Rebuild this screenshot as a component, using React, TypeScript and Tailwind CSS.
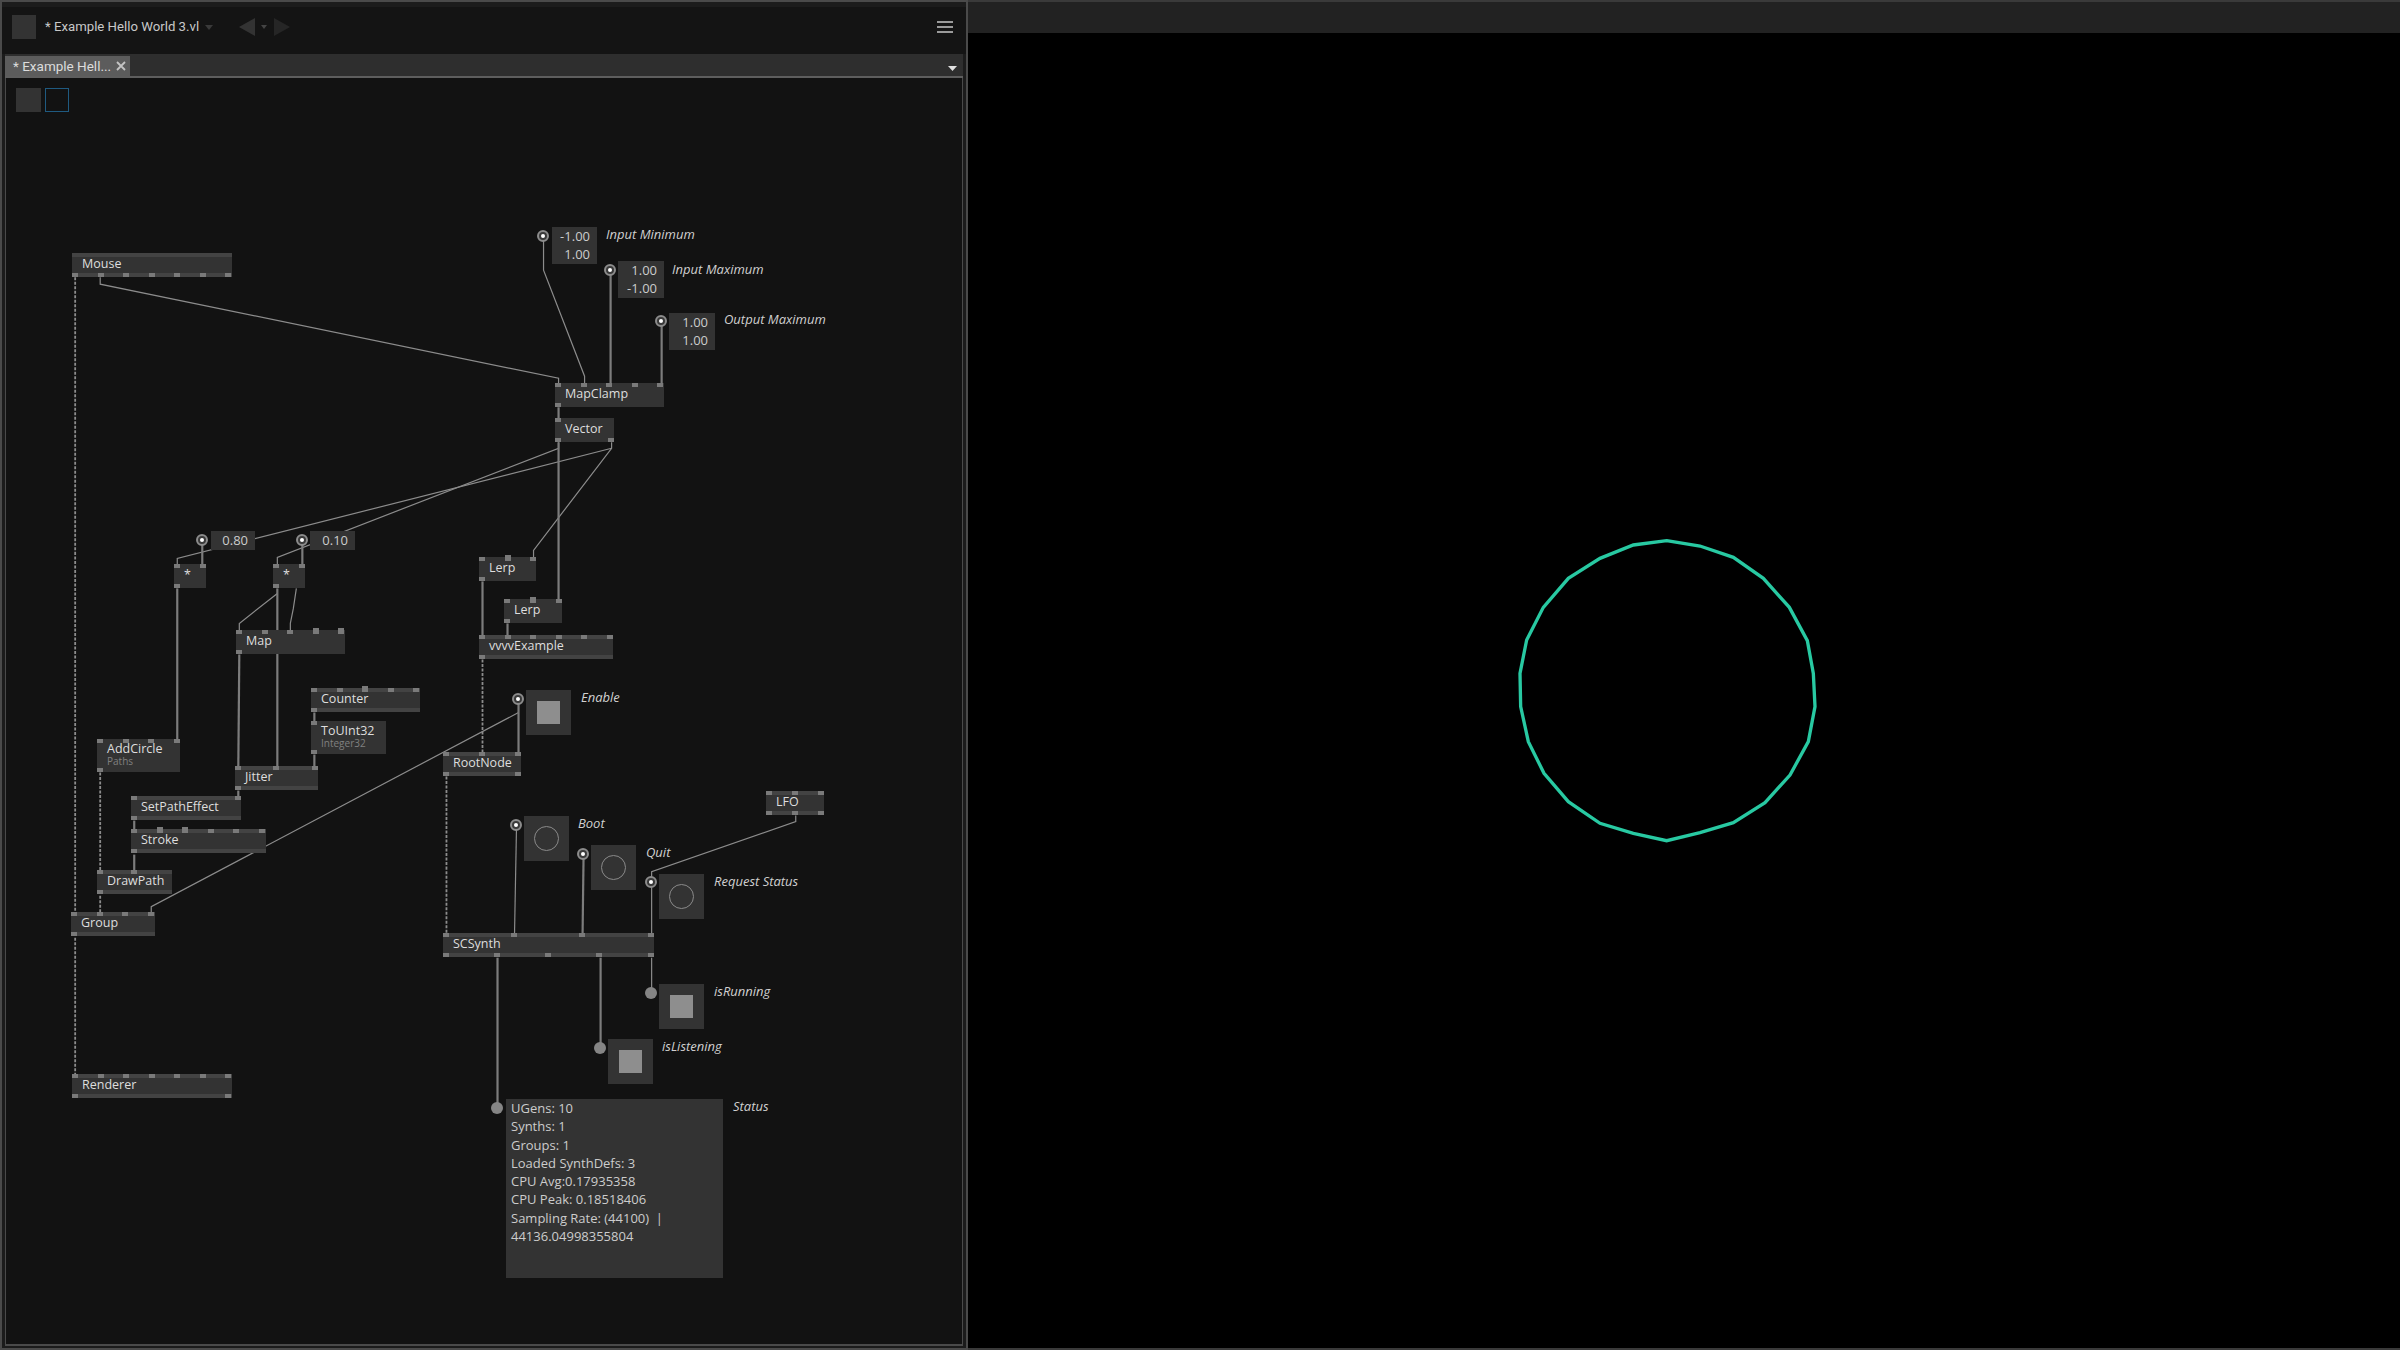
import React from 'react';

const OX = 6;
const OY = 78;

type NodeDef = {
    name: string;
    sub?: string;
    x: number;
    y: number;
    w: number;
    h?: number;
    bars?: boolean;
    top?: number[];
    big?: number[];
    bottom?: number[];
};

const row = [3, 28.5, 54, 79.5, 105, 130.5, 156];

const nodes: NodeDef[] = [
    { name: 'Mouse', x: 72, y: 253, w: 160, bars: true, bottom: row },
    { name: 'MapClamp', x: 555, y: 383, w: 109, top: row.slice(0, 5), bottom: [3] },
    { name: 'Vector', x: 555, y: 418, w: 59, top: [3], bottom: [3, 55.5] },
    { name: '*', x: 174, y: 564, w: 32, top: [3, 28.5], bottom: [3] },
    { name: '*', x: 273, y: 564, w: 32, top: [3, 28.5], bottom: [3] },
    { name: 'Lerp', x: 479, y: 557, w: 57, top: [3, 54], big: [28.5], bottom: [3] },
    { name: 'Lerp', x: 504, y: 599, w: 58, top: [3, 54.5], big: [29], bottom: [3] },
    { name: 'vvvvExample', x: 479, y: 635, w: 134, bars: true, top: row.slice(0, 6), bottom: [3] },
    { name: 'Map', x: 236, y: 630, w: 109, top: [3, 28.5, 54], big: [79.5, 105], bottom: [3] },
    { name: 'Counter', x: 311, y: 688, w: 109, bars: true, top: [3, 28.5, 79.5, 105], big: [54], bottom: [3] },
    { name: 'ToUInt32', sub: 'Integer32', x: 311, y: 721, w: 75, h: 33, top: [3], bottom: [3] },
    { name: 'AddCircle', sub: 'Paths', x: 97, y: 739, w: 83, h: 33, top: [3, 28.5, 54, 79.5], bottom: [3] },
    { name: 'RootNode', x: 443, y: 752, w: 78, bars: true, top: [3, 39, 75], bottom: [3, 75] },
    { name: 'Jitter', x: 235, y: 766, w: 83, bars: true, top: [3, 41, 79.5], bottom: [3] },
    { name: 'LFO', x: 766, y: 791, w: 58, bars: true, top: [3, 29, 55], bottom: [3, 29, 55] },
    { name: 'SetPathEffect', x: 131, y: 796, w: 110, bars: true, top: [3, 107], bottom: [3] },
    { name: 'Stroke', x: 131, y: 829, w: 135, bars: true, top: [3, 79.5, 105, 130.5], big: [28.5, 54], bottom: [3] },
    { name: 'DrawPath', x: 97, y: 870, w: 75, bars: true, top: [3, 37], bottom: [3] },
    { name: 'Group', x: 71, y: 912, w: 84, bars: true, top: row.slice(0, 4), bottom: [3] },
    { name: 'SCSynth', x: 443, y: 933, w: 211, bars: true, top: [3, 71, 139, 207.5], bottom: [3, 54, 105, 156, 207.5] },
    { name: 'Renderer', x: 72, y: 1074, w: 160, bars: true, top: row, bottom: [3, 156] },
];

const values = [
    { x: 211, y: 531, w: 44, h: 19, lines: ['0.80'] },
    { x: 310, y: 531, w: 45, h: 19, lines: ['0.10'] },
    { x: 552, y: 227, w: 45, h: 37, lines: ['-1.00', '1.00'] },
    { x: 618, y: 261, w: 46, h: 37, lines: ['1.00', '-1.00'] },
    { x: 669, y: 313, w: 46, h: 37, lines: ['1.00', '1.00'] },
];

const toggles = [
    { x: 526, y: 690, on: true },
    { x: 524, y: 816, on: false },
    { x: 591, y: 845, on: false },
    { x: 659, y: 874, on: false },
    { x: 659, y: 984, on: true },
    { x: 608, y: 1039, on: true },
];

const labels = [
    { x: 606, y: 235, text: 'Input Minimum' },
    { x: 672, y: 270, text: 'Input Maximum' },
    { x: 724, y: 320, text: 'Output Maximum' },
    { x: 581, y: 698, text: 'Enable' },
    { x: 578, y: 824, text: 'Boot' },
    { x: 646, y: 853, text: 'Quit' },
    { x: 714, y: 882, text: 'Request Status' },
    { x: 714, y: 992, text: 'isRunning' },
    { x: 662, y: 1047, text: 'isListening' },
    { x: 733, y: 1107, text: 'Status' },
];

const inPins = [
    [202, 540],
    [302, 540],
    [543, 236],
    [610, 270],
    [661, 321],
    [518, 699],
    [516, 825],
    [583, 854],
    [651, 882],
];

const outPins = [
    [651, 993],
    [600, 1048],
    [497, 1108],
];

// value links
const thin = [
    '100,277 100,284 558,378 558,383',
    '543,236 543,270 584,376 584,383',
    '611,442 611,448 533,550 533,557',
    '558,442 558,448 277,557 277,564',
    '611,448 177,558 177,564',
    '277,593 239,623 239,630',
    '296,588 293,608 290,623 290,630',
    '151,912 151,906 518,712',
    '795,815 795,821 651,871 651,882',
    '516,825 514,933',
    '651,882 651,933',
    '651,957 651,993',
];

const thick = [
    '610,270 610,383',
    '661,321 661,383',
    '558,407 558,418',
    '558,442 558,599',
    '202,540 202,564',
    '302,540 302,564',
    '177,588 177,739',
    '277,588 277,766',
    '239,654 238,766',
    '314,712 314,721',
    '314,754 314,766',
    '238,790 238,796',
    '134,820 134,829',
    '134,854 134,870',
    '518,699 518,752',
    '482,581 482,635',
    '507,623 507,635',
    '583,854 582,933',
    '497,957 497,1108',
    '600,957 600,1048',
];

// spread links
const dashed = [
    '75,277 75,912',
    '75,937 75,1074',
    '100,772 100,870',
    '100,895 100,912',
    '482,659 482,752',
    '446,776 446,933',
];

const statusLines = [
    'UGens: 10',
    'Synths: 1',
    'Groups: 1',
    'Loaded SynthDefs: 3',
    'CPU Avg:0.17935358',
    'CPU Peak: 0.18518406',
    'Sampling Rate: (44100)  |',
    '44136.04998355804',
];

const circlePoints =
    '500,62 600,78 700,112 790,175 868,262 922,362 940,460 945,560 925,665 870,765 795,848 700,908 600,938 500,962 400,940 300,910 205,845 132,760 85,665 62,560 60,460 80,360 130,262 205,175 300,115 400,75';

const Pin: React.FC<{ at: number; big?: boolean; side: 'top' | 'bottom' }> = ({ at, big, side }) => (
    <div
        className={`absolute bg-[#7a7a7a] ${big ? 'w-[6px] h-[6px]' : 'w-[6px] h-[4px]'} ${
            side === 'top' ? (big ? '-top-[2px]' : 'top-0') : 'bottom-0'
        }`}
        style={{ left: at - 3 }}
    />
);

const PatchNode: React.FC<{ node: NodeDef }> = ({ node }) => (
    <div
        className={`absolute flex flex-col justify-center pl-[10px] pb-[2px] bg-[#333333] text-[#dedede] ${
            node.bars ? 'border-y-4 border-[#434343]' : ''
        }`}
        style={{ left: node.x - OX, top: node.y - OY, width: node.w, height: node.h ?? 24 }}
    >
        <span className="text-[12.500px] leading-[14px] whitespace-nowrap">{node.name}</span>
        {node.sub && <span className="text-[10px] leading-[11px] text-[#808080]">{node.sub}</span>}
        <div className={`absolute inset-x-0 ${node.bars ? '-top-[4px] -bottom-[4px]' : 'inset-y-0'}`}>
            {node.top?.map((at) => <Pin key={at} at={at} side="top" />)}
            {node.big?.map((at) => <Pin key={at} at={at} big side="top" />)}
            {node.bottom?.map((at) => <Pin key={at} at={at} side="bottom" />)}
        </div>
    </div>
);

const Wires: React.FC = () => (
    <svg className="absolute inset-0 w-full h-full" viewBox={`${OX} ${OY} 955 1265`} fill="none">
        {thin.map((p) => (
            <polyline key={p} points={p} stroke="#8c8c8c" strokeWidth={1.2} />
        ))}
        {thick.map((p) => (
            <polyline key={p} points={p} stroke="#7c7c7c" strokeWidth={2.2} />
        ))}
        {dashed.map((p) => (
            <polyline key={p} points={p} stroke="#8c8c8c" strokeWidth={1.8} strokeDasharray="3 1.5" />
        ))}
    </svg>
);

const App: React.FC = () => {
    return (
        <div className="flex w-[2400px] h-[1350px] overflow-hidden bg-black font-['Open_Sans','Noto_Sans',sans-serif]">
            {/* Patch editor */}
            <div className="flex flex-col w-[968px] h-full bg-[#1b1b1b] border-2 border-[#4a4a4a]">
                {/* Title bar */}
                <div className="flex items-center h-[52px] pb-[7px] bg-[#141414] border-t-[5px] border-[#1c1c1c] pl-[10px] pr-[13px]">
                    <div className="w-[24px] h-[24px] bg-[#333333]" />
                    <span className="ml-[9px] font-['Roboto',sans-serif] text-[13.200px] text-[#c8c8c8] whitespace-nowrap">
                        * Example Hello World 3.vl
                    </span>
                    <svg className="ml-[6px]" width="8" height="5" viewBox="0 0 8 5">
                        <path d="M0 0H8L4 5Z" fill="#3a3a3a" />
                    </svg>
                    <svg className="ml-[26px]" width="16" height="18" viewBox="0 0 16 18">
                        <path d="M16 0V18L0 9Z" fill="#333333" />
                    </svg>
                    <svg className="ml-[6px]" width="6" height="4" viewBox="0 0 6 4">
                        <path d="M0 0H6L3 4Z" fill="#444444" />
                    </svg>
                    <svg className="ml-[7px]" width="16" height="18" viewBox="0 0 16 18">
                        <path d="M0 0V18L16 9Z" fill="#262626" />
                    </svg>
                    <div className="ml-auto flex flex-col gap-[3px] w-[16px]">
                        <div className="h-[2px] bg-[#9a9a9a]" />
                        <div className="h-[2px] bg-[#9a9a9a]" />
                        <div className="h-[2px] bg-[#9a9a9a]" />
                    </div>
                </div>

                {/* Tabs */}
                <div className="flex items-end justify-between h-[24px] mx-[3px] bg-[#2e2e2e] border-b-2 border-[#5e5e5e]">
                    <div className="flex items-center justify-between w-[125px] h-[20px] bg-[#5c5c5c] pl-[8px] pr-[4px] font-['Roboto',sans-serif] text-[13.500px] text-[#dddddd]">
                        <span className="whitespace-nowrap">* Example Hell...</span>
                        <svg width="10" height="10" viewBox="0 0 10 10" stroke="#c4c4c4" strokeWidth="1.8">
                            <path d="M1 1L9 9M9 1L1 9" />
                        </svg>
                    </div>
                    <svg className="mr-[6px] mb-[5px]" width="9" height="5" viewBox="0 0 9 5">
                        <path d="M0 0H9L4.500 5Z" fill="#e0e0e0" />
                    </svg>
                </div>

                {/* Canvas */}
                <div className="relative flex-1 mx-[3px] mb-[2px] bg-[#121212] border-x border-b-2 border-[#4a4a4a]">
                    <div className="absolute left-[10px] top-[10px] flex gap-[4px]">
                        <div className="w-[25px] h-[24px] bg-[#333333]" />
                        <div className="w-[24px] h-[24px] border border-[#1f5a80]" />
                    </div>

                    <Wires />

                    {values.map((v) => (
                        <div
                            key={v.x}
                            className="absolute flex flex-col justify-center items-end pr-[7px] pb-[2px] bg-[#333333] text-[13px] leading-[18px] text-[#cccccc]"
                            style={{ left: v.x - OX, top: v.y - OY, width: v.w, height: v.h }}
                        >
                            {v.lines.map((line, i) => (
                                <span key={i}>{line}</span>
                            ))}
                        </div>
                    ))}

                    {nodes.map((node) => (
                        <PatchNode key={`${node.name}-${node.x}`} node={node} />
                    ))}

                    {toggles.map((t) => (
                        <div
                            key={`${t.x}-${t.y}`}
                            className="absolute flex items-center justify-center w-[45px] h-[45px] bg-[#333333]"
                            style={{ left: t.x - OX, top: t.y - OY }}
                        >
                            {t.on ? (
                                <div className="w-[23px] h-[23px] bg-[#8e8e8e]" />
                            ) : (
                                <div className="w-[25px] h-[25px] rounded-full border border-[#8a8a8a]" />
                            )}
                        </div>
                    ))}

                    {inPins.map(([x, y]) => (
                        <div
                            key={`${x}-${y}`}
                            className="absolute flex items-center justify-center w-[12px] h-[12px] rounded-full bg-[#3a3a3a] border-2 border-[#8c8c8c]"
                            style={{ left: x - OX - 6, top: y - OY - 6 }}
                        >
                            <div className="w-[4px] h-[4px] rounded-full bg-white" />
                        </div>
                    ))}

                    {outPins.map(([x, y]) => (
                        <div
                            key={`${x}-${y}`}
                            className="absolute w-[12px] h-[12px] rounded-full bg-[#858585]"
                            style={{ left: x - OX - 6, top: y - OY - 6 }}
                        />
                    ))}

                    {labels.map((l) => (
                        <span
                            key={l.text}
                            className="absolute -translate-y-1/2 text-[13px] italic text-[#d0d0d0] whitespace-nowrap"
                            style={{ left: l.x - OX, top: l.y - OY }}
                        >
                            {l.text}
                        </span>
                    ))}

                    {/* Status readout */}
                    <div
                        className="absolute w-[217px] h-[179px] bg-[#333333] pl-[5px] text-[13px] leading-[18.300px] text-[#cccccc] whitespace-pre"
                        style={{ left: 506 - OX, top: 1099 - OY }}
                    >
                        {statusLines.map((line) => (
                            <div key={line}>{line}</div>
                        ))}
                    </div>
                </div>
            </div>

            {/* Render window */}
            <div className="flex flex-col flex-1 h-full">
                <div className="h-[33px] bg-[#222222] border-t-2 border-[#3a3a3a]" />
                <div className="flex flex-1 items-center justify-center pr-[38px] pb-[12px] bg-black border-b-2 border-[#3a3a3a]">
                    <svg width="330" height="330" viewBox="0 0 990 990" fill="none">
                        <polygon points={circlePoints} stroke="#28c9a2" strokeWidth={10} />
                    </svg>
                </div>
            </div>
        </div>
    );
};

export default App;
